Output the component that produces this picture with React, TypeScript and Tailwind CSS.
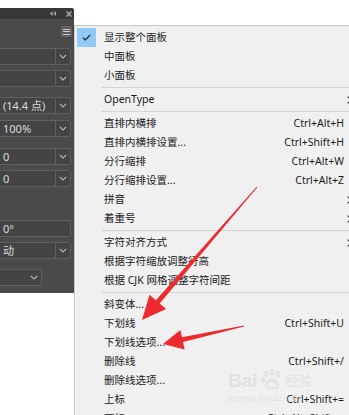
import React from "react";

const FONT = '"Noto Sans", "Noto Sans CJK SC", sans-serif';

type Item =
  | { type: "sep" }
  | { type: "item"; label: string; shortcut?: string; sub?: boolean; checked?: boolean };

const items: Item[] = [
  { type: "item", label: "显示整个面板", checked: true },
  { type: "item", label: "中面板" },
  { type: "item", label: "小面板" },
  { type: "sep" },
  { type: "item", label: "OpenType", sub: true },
  { type: "sep" },
  { type: "item", label: "直排内横排", shortcut: "Ctrl+Alt+H" },
  { type: "item", label: "直排内横排设置...", shortcut: "Ctrl+Shift+H" },
  { type: "item", label: "分行缩排", shortcut: "Ctrl+Alt+W" },
  { type: "item", label: "分行缩排设置...", shortcut: "Ctrl+Alt+Z" },
  { type: "item", label: "拼音", sub: true },
  { type: "item", label: "着重号", sub: true },
  { type: "sep" },
  { type: "item", label: "字符对齐方式", sub: true },
  { type: "item", label: "根据字符缩放调整行高" },
  { type: "item", label: "根据 CJK 网格调整字符间距" },
  { type: "sep" },
  { type: "item", label: "斜变体..." },
  { type: "item", label: "下划线", shortcut: "Ctrl+Shift+U" },
  { type: "item", label: "下划线选项..." },
  { type: "item", label: "删除线", shortcut: "Ctrl+Shift+/" },
  { type: "item", label: "删除线选项..." },
  { type: "item", label: "上标", shortcut: "Ctrl+Shift+=" },
  { type: "item", label: "下标", shortcut: "Ctrl+Alt+Shift+=" },
];

function Chevron() {
  return (
    <svg width="8" height="5" viewBox="0 0 8 5" className="block">
      <path d="M0.8 0.8 L4 4 L7.2 0.8" fill="none" stroke="#b9b9b9" strokeWidth="1.1" />
    </svg>
  );
}

function Field({
  text,
  chevron = true,
  divider = true,
  width = "w-[71px]",
  mt,
}: {
  text?: string;
  chevron?: boolean;
  divider?: boolean;
  width?: string;
  mt: string;
}) {
  return (
    <div
      className={`${mt} ${width} h-[17px] shrink-0 flex items-stretch border border-l-0 border-[#5f5f5f] rounded-r-[3px] bg-[#444444]`}
    >
      <div className="flex-1 flex items-center pl-[3px] text-[11px] text-[#dadada] leading-none whitespace-nowrap overflow-hidden">
        {text}
      </div>
      {chevron && (
        <div
          className={`w-[15px] flex items-center justify-center ${divider ? "border-l border-[#5f5f5f]" : ""}`}
        >
          <Chevron />
        </div>
      )}
    </div>
  );
}

function Panel() {
  return (
    <div className="w-[74px] shrink-0 h-[415px] flex flex-col">
      <div className="h-[8px] shrink-0 bg-white" />
      <div
        className="h-[285px] shrink-0 bg-[#4a4a4a] rounded-tr-[3px] flex flex-col overflow-hidden"
        style={{ fontFamily: FONT }}
      >
        <div className="h-[11px] shrink-0 bg-[#383838] flex items-center justify-end pr-[2px] gap-[10px]">
          <svg width="6" height="5" viewBox="0 0 6 5">
            <path d="M2.5 0 L0 2.5 L2.5 5 Z M6 0 L3.5 2.5 L6 5 Z" fill="#a9a9a9" />
          </svg>
          <svg width="6" height="6" viewBox="0 0 6 6">
            <path d="M0.5 0.5 L5.5 5.5 M5.5 0.5 L0.5 5.5" stroke="#a9a9a9" strokeWidth="1.5" />
          </svg>
        </div>
        <div className="flex flex-col">
          <div className="mt-[7px] shrink-0 flex justify-end pr-[2px]">
            <div className="w-[11px] h-[11px] rounded-[2px] bg-[#5a5a5a] border border-[#6a6a6a] flex flex-col items-center justify-center gap-[1.5px]">
              <div className="w-[7px] h-[1px] bg-[#d0d0d0]" />
              <div className="w-[7px] h-[1px] bg-[#d0d0d0]" />
              <div className="w-[7px] h-[1px] bg-[#d0d0d0]" />
            </div>
          </div>
          <Field mt="mt-[11px]" />
          <Field mt="mt-[5px]" />
          <Field mt="mt-[10px]" text="(14.4 点)" />
          <Field mt="mt-[6px]" text="100%" />
          <Field mt="mt-[11px]" text="0" />
          <Field mt="mt-[5px]" text="0" />
          <Field mt="mt-[33px]" text="0°" chevron={false} />
          <Field mt="mt-[5px]" text="动" />
          <Field mt="mt-[10px]" width="w-[42px]" divider={false} />
        </div>
      </div>
      <div className="flex-1 bg-white" />
    </div>
  );
}

function Menu() {
  return (
    <div className="flex-1 h-[415px] flex flex-col">
      <div className="h-[25px] shrink-0 bg-white" />
      <div
        className="w-[290px] flex-1 bg-[#f0f0f0] border-l border-t border-[#c9c9c9] pl-[2px] pt-[2px] flex flex-col"
        style={{ fontFamily: FONT }}
      >
        {items.map((it, i) =>
          it.type === "sep" ? (
            <div key={i} className="h-[5px] shrink-0 flex items-center pl-[25px]">
              <div className="flex-1 h-[1px] bg-[#d5d5d5]" />
            </div>
          ) : (
            <div key={i} className="h-[19px] shrink-0 flex items-center text-[10.5px] text-[#1b1b1b] leading-none">
              <div className={`w-[19px] h-[19px] flex items-center justify-center ${it.checked ? "bg-[#91c9f7]" : ""}`}>
                {it.checked && (
                  <svg width="9" height="7" viewBox="0 0 9 7">
                    <path d="M0.7 3.6 L3.3 6 L8.3 0.8" fill="none" stroke="#1a1a1a" strokeWidth="1.2" />
                  </svg>
                )}
              </div>
              <div className="ml-[8px] flex-1 whitespace-nowrap">{it.label}</div>
              {it.shortcut && <div className="whitespace-nowrap">{it.shortcut}</div>}
              <div className="w-[20px] flex items-center pl-[3px]">
                {it.sub && (
                  <svg width="5" height="8" viewBox="0 0 5 8">
                    <path d="M0.6 0.6 L4 4 L0.6 7.4" fill="none" stroke="#333" strokeWidth="1.1" />
                  </svg>
                )}
              </div>
            </div>
          )
        )}
      </div>
    </div>
  );
}

function Watermark() {
  return (
    <div
      className="absolute left-[228px] top-[368px] flex flex-col pointer-events-none"
      style={{ fontFamily: '"Liberation Sans", "Noto Sans CJK SC", sans-serif' }}
    >
      <div className="flex items-center gap-[2px]">
        <span className="text-[19px] font-bold text-[#e2e2e2] leading-none">Bai</span>
        <svg width="24" height="24" viewBox="0 0 24 24">
          <g fill="#e4e4e4">
            <ellipse cx="6" cy="6" rx="2.5" ry="3.2" />
            <ellipse cx="12" cy="4" rx="2.5" ry="3.2" />
            <ellipse cx="18" cy="6" rx="2.5" ry="3.2" />
            <ellipse cx="3" cy="12" rx="2.2" ry="2.8" />
            <path d="M12 10 C16 10 21 16 19 20 C17 23 14 21 12 21 C10 21 7 23 5 20 C3 16 8 10 12 10 Z" />
          </g>
          <text x="12" y="19" textAnchor="middle" fontSize="7" fontWeight="bold" fill="#f4f4f4">
            du
          </text>
        </svg>
        <span className="text-[13px] text-[#e2e2e2] leading-none">经验</span>
      </div>
      <span className="text-[9px] text-[#e4e4e4] leading-none mt-[2px]">jingyan.baidu.com</span>
    </div>
  );
}

function Arrows() {
  return (
    <svg className="absolute inset-0 pointer-events-none" width="349" height="415" viewBox="0 0 349 415">
      <polygon
        fill="#ef2a2e"
        points="257.4,187.3 159.7,303.5 166.1,309.1 142,320 149.5,294.7 155.9,300.3 256.6,186.7"
      />
      <polygon
        fill="#ef2a2e"
        points="244.1,326.5 183,342.1 184.7,349.5 163,344 180.3,329.9 182,337.3 243.9,325.5"
      />
    </svg>
  );
}

export default function App() {
  return (
    <div className="relative w-[349px] h-[415px] overflow-hidden bg-white flex">
      <Panel />
      <Menu />
      <Watermark />
      <Arrows />
    </div>
  );
}
